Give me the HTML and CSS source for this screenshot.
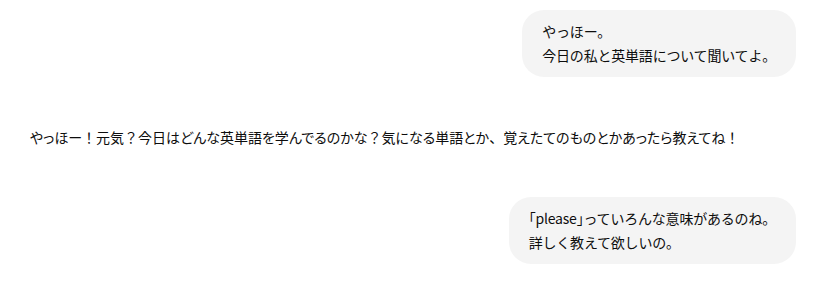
FILE: index.html
```html
<!DOCTYPE html>
<html lang="ja">
<head>
  <meta charset="UTF-8" />
  <meta name="viewport" content="width=device-width, initial-scale=1.0" />
  <title>Chat</title>
  <link rel="stylesheet" href="styles.css">
</head>
<body>
  <div class="chat">
    <div class="msg user">
      <div class="bubble">やっほー。<br>今日の私と英単語について聞いてよ。</div>
    </div>
    <div class="msg bot">
      <p>やっほー<span class="fw">！</span>元気<span class="fw">？</span>今日はどんな英単語を学んでるのかな<span class="fw">？</span>気になる単語とか<span class="fw">、</span>覚えたてのものとかあったら教えてね<span class="fw">！</span></p>
    </div>
    <div class="msg user">
      <div class="bubble"><span class="hw">「</span>please<span class="hw">」</span>っていろんな意味があるのね。<br>詳しく教えて欲しいの。</div>
    </div>
  </div>
</body>
</html>
```

FILE: styles.css
```css
body {
  margin: 0;
  font-family: "Noto Sans CJK JP", "Noto Sans", sans-serif;
  font-size: 14px;
  color: #0d0d0d;
  background: #fff;
}
.chat {
  display: flex;
  flex-direction: column;
  gap: 48px;
  padding: 10px 17px 0 30px;
}
.msg {
  display: flex;
}
.user {
  justify-content: flex-end;
}
.bubble {
  background: #f4f4f4;
  border-radius: 22px;
  padding: 10px 20px;
  line-height: 23.5px;
  letter-spacing: -0.2px;
}
.bot p {
  margin: 0;
  line-height: 24px;
  font-feature-settings: "palt";
}
.fw {
  font-feature-settings: normal;
}
.hw {
  font-feature-settings: "halt";
}
```
